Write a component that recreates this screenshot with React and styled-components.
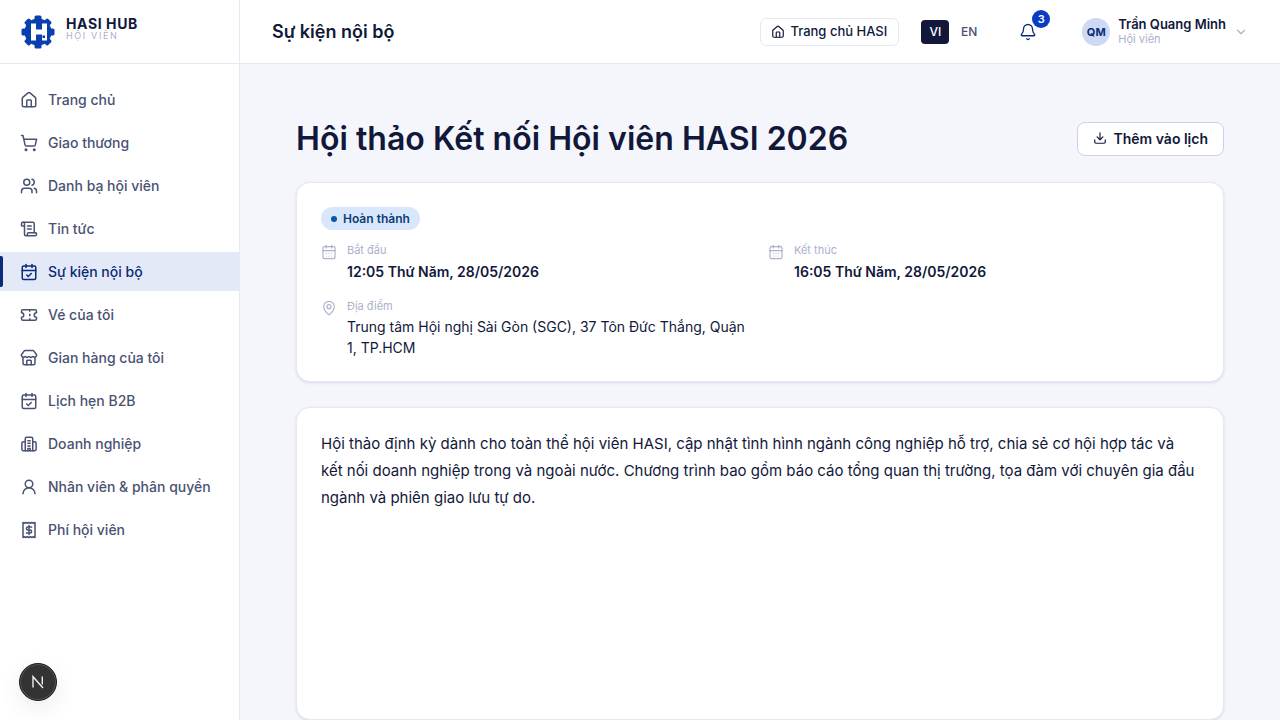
import React from 'react';
import styled, { createGlobalStyle } from 'styled-components';
import {
  House, ShoppingCart, Users, ScrollText, CalendarCheck, Ticket, Store,
  UserRound, Bell, ChevronDown, Download, CalendarDays, MapPin,
} from 'lucide-react';

const GlobalStyle = createGlobalStyle`
  html, body { margin: 0; height: 100%; overflow: hidden; }
  body { font-family: Inter, 'Noto Sans', sans-serif; color: #11183a; background: #f5f6fc; }
  * { box-sizing: border-box; }
  svg { flex-shrink: 0; }
`;

const Shell = styled.div`
  display: grid;
  grid-template-columns: 240px 1fr;
  grid-template-rows: 64px 1fr;
  width: 1280px;
  height: 720px;
  overflow: hidden;
`;

const Brand = styled.div`
  display: flex;
  align-items: center;
  gap: 11px;
  padding-left: 21px;
  background: #fff;
  border-right: 1px solid #e6e8f3;
  border-bottom: 1px solid #e6e8f3;
`;

const BrandText = styled.div`
  display: flex;
  flex-direction: column;
  margin-top: -6px;
`;

const BrandName = styled.span`
  font-size: 14px;
  line-height: 15px;
  font-weight: 700;
  letter-spacing: 0.6px;
  color: #11183a;
`;

const BrandSub = styled.span`
  font-size: 9px;
  line-height: 10px;
  letter-spacing: 1.65px;
  color: #aab1cb;
`;

const Header = styled.header`
  display: flex;
  align-items: center;
  padding: 0 32px;
  background: #fff;
  border-bottom: 1px solid #e6e8f3;
`;

const PageName = styled.h1`
  flex: 1;
  margin: 0;
  font-size: 18px;
  font-weight: 600;
  color: #11183a;
`;

const HomeLink = styled.a`
  display: flex;
  align-items: center;
  gap: 5px;
  height: 28px;
  padding: 0 11px 1px 10px;
  border: 1px solid #e6e8f3;
  border-radius: 6px;
  font-size: 13px;
  font-weight: 500;
  color: #11183a;

  svg {
    margin-top: 1px;
  }
`;

const LangSwitch = styled.div`
  display: flex;
  gap: 6px;
  margin-left: 22px;
`;

const LangButton = styled.span`
  width: 28px;
  height: 24px;
  padding-bottom: 1px;
  display: grid;
  place-items: center;
  border-radius: 4px;
  font-size: 12px;
  font-weight: 500;
  color: ${p => (p.$active ? '#fff' : '#4a5272')};
  background: ${p => (p.$active ? '#11183a' : 'transparent')};
`;

const BellWrap = styled.div`
  position: relative;
  display: flex;
  margin-left: 36px;
  color: #0b2a7a;
`;

const BellBadge = styled.span`
  position: absolute;
  top: -13px;
  right: -13px;
  width: 18px;
  height: 18px;
  display: grid;
  place-items: center;
  border-radius: 50%;
  background: #0a3cc4;
  color: #fff;
  font-size: 11px;
  font-weight: 600;
`;

const UserBox = styled.div`
  display: flex;
  align-items: center;
  gap: 8px;
  margin-left: 45px;
`;

const Avatar = styled.div`
  width: 28px;
  height: 28px;
  display: grid;
  place-items: center;
  border-radius: 50%;
  background: #ced9f3;
  color: #0b2a7a;
  font-size: 11px;
  font-weight: 700;
`;

const UserText = styled.div`
  display: flex;
  flex-direction: column;
  margin-top: -1px;
`;

const UserName = styled.span`
  font-size: 13px;
  line-height: 16px;
  font-weight: 600;
  color: #11183a;
`;

const UserRole = styled.span`
  font-size: 11px;
  line-height: 14px;
  color: #aab1cb;
`;

const UserCaret = styled.span`
  display: flex;
  color: #aab1cb;
`;

const Sidebar = styled.nav`
  position: relative;
  display: flex;
  flex-direction: column;
  gap: 4px;
  padding-top: 16px;
  background: #fff;
  border-right: 1px solid #e6e8f3;
`;

const NavItem = styled.a`
  position: relative;
  display: flex;
  align-items: center;
  gap: 10px;
  height: 39px;
  padding-left: 20px;
  font-size: 14px;
  font-weight: 500;
  color: ${p => (p.$active ? '#0b2a7a' : '#4a5272')};
  background: ${p => (p.$active ? '#e3e9f6' : 'transparent')};

  &::before {
    content: '';
    display: ${p => (p.$active ? 'block' : 'none')};
    position: absolute;
    left: 0;
    top: 4px;
    bottom: 4px;
    width: 3px;
    border-radius: 0 2px 2px 0;
    background: #0b2a7a;
  }
`;

const DevBadge = styled.div`
  position: absolute;
  left: 19px;
  bottom: 19px;
  width: 38px;
  height: 38px;
  display: grid;
  place-items: center;
  border-radius: 50%;
  background: #333;
  border: 1px solid #1c1c1c;
  box-shadow: inset 0 0 0 1px #555, 0 8px 24px rgba(0, 0, 0, 0.08);
  color: #eee;
`;

const Main = styled.main`
  display: flex;
  flex-direction: column;
  gap: 25px;
  padding: 58px 56px 0;
  overflow: hidden;
`;

const TitleRow = styled.div`
  display: flex;
  align-items: center;
  justify-content: space-between;
  height: 34px;
  margin-bottom: 1px;
`;

const Title = styled.h2`
  margin: 0 0 2px;
  font-size: 32px;
  font-weight: 600;
  letter-spacing: 0.03px;
  color: #11183a;
`;

const AddButton = styled.button`
  display: flex;
  align-items: center;
  gap: 7px;
  height: 34px;
  padding: 0 15px 2px;
  border: 1px solid #cdd2e6;
  border-radius: 8px;
  background: #fff;
  font: 600 14px Inter, sans-serif;
  color: #11183a;
`;

const Card = styled.section`
  padding: 24px 24px 23px;
  background: #fff;
  border: 1px solid #e6e8f3;
  border-radius: 14px;
  box-shadow: 0 1px 3px rgba(17, 24, 58, 0.12);
`;

const BodyCard = styled(Card)`
  height: 420px;
  font-size: 15px;
  line-height: 27px;
  color: #11183a;
  padding-top: 22px;
`;

const Status = styled.span`
  display: flex;
  width: fit-content;
  align-items: center;
  gap: 6px;
  height: 23px;
  padding: 0 10px;
  border-radius: 12px;
  background: #d9e7fd;
  color: #0b3d73;
  font-size: 12px;
  font-weight: 600;
`;

const StatusDot = styled.i`
  width: 6px;
  height: 6px;
  border-radius: 50%;
  background: #0b56a5;
`;

const InfoGrid = styled.div`
  display: grid;
  grid-template-columns: 425px 1fr;
  column-gap: 22px;
  row-gap: 16px;
  margin-top: 12px;
`;

const Info = styled.div`
  display: flex;
  gap: 10px;
  color: #aab1cb;

  svg {
    margin-top: 2px;
  }
`;

const InfoLabel = styled.div`
  font-size: 11px;
  line-height: 16px;
  color: #aab1cb;
`;

const InfoStrong = styled.div`
  margin-top: 4px;
  font-size: 14px;
  line-height: 20px;
  font-weight: 600;
  color: #11183a;
`;

const InfoPlain = styled.div`
  margin-top: 2px;
  font-size: 14px;
  line-height: 21px;
  color: #11183a;
`;

const Logo = () => (
  <svg width="34" height="34" viewBox="0 0 34 34">
    <circle cx="17" cy="17" r="13.500" fill="#0a3fae" />
    {[0, 45, 90, 135, 180, 225, 270, 315].map(a => (
      <rect key={a} x="13.500" y="0.500" width="7" height="6" rx="1.500" fill="#0a3fae" transform={`rotate(${a} 17 17)`} />
    ))}
    <path d="M10 8.500h5v6h6v-6h5v17h-5v-6h-6v6h-5z" fill="#fff" />
    <rect x="21.500" y="20.500" width="2.500" height="2.500" fill="#0a3fae" />
  </svg>
);

const BuildingIcon = ({ size }) => (
  <svg width={size} height={size} viewBox="0 0 24 24" fill="none" stroke="currentColor" strokeWidth="2" strokeLinecap="round" strokeLinejoin="round">
    <path d="M7 21V5a2 2 0 0 1 2-2h6a2 2 0 0 1 2 2v16z" />
    <path d="M7 9H4.500A2 2 0 0 0 2.500 11v8a2 2 0 0 0 2 2H7M17 9h2.500a2 2 0 0 1 2 2v8a2 2 0 0 1-2 2H17" />
    <path d="M10.500 7.500h3M10.500 11h3M10.500 14.500h3M10.500 21v-3h3v3" />
  </svg>
);

const FeeIcon = ({ size }) => (
  <svg width={size} height={size} viewBox="0 0 24 24" fill="none" stroke="currentColor" strokeWidth="2" strokeLinecap="round" strokeLinejoin="round">
    <path d="M4 2l2 1 2-1 2 1 2-1 2 1 2-1 2 1 2-1v20l-2-1-2 1-2-1-2 1-2-1-2 1-2-1-2 1z" />
    <path d="M15.500 8h-5a2 2 0 0 0 0 4h3a2 2 0 0 1 0 4h-5M12 6v12" />
  </svg>
);

const menu = [
  ['Trang chủ', House],
  ['Giao thương', ShoppingCart],
  ['Danh bạ hội viên', Users],
  ['Tin tức', ScrollText],
  ['Sự kiện nội bộ', CalendarCheck, true],
  ['Vé của tôi', Ticket],
  ['Gian hàng của tôi', Store],
  ['Lịch hẹn B2B', CalendarCheck],
  ['Doanh nghiệp', BuildingIcon],
  ['Nhân viên & phân quyền', UserRound],
  ['Phí hội viên', FeeIcon],
];

export default function App() {
  return (
    <Shell>
      <GlobalStyle />
      <Brand>
        <Logo />
        <BrandText>
          <BrandName>HASI HUB</BrandName>
          <BrandSub>HỘI VIÊN</BrandSub>
        </BrandText>
      </Brand>
      <Header>
        <PageName>Sự kiện nội bộ</PageName>
        <HomeLink><House size={14} />Trang chủ HASI</HomeLink>
        <LangSwitch>
          <LangButton $active>VI</LangButton>
          <LangButton>EN</LangButton>
        </LangSwitch>
        <BellWrap>
          <Bell size={18} strokeWidth={1.75} />
          <BellBadge>3</BellBadge>
        </BellWrap>
        <UserBox>
          <Avatar>QM</Avatar>
          <UserText>
            <UserName>Trần Quang Minh</UserName>
            <UserRole>Hội viên</UserRole>
          </UserText>
          <UserCaret><ChevronDown size={14} strokeWidth={2} /></UserCaret>
        </UserBox>
      </Header>
      <Sidebar>
        {menu.map(([label, Icon, active]) => (
          <NavItem key={label} $active={active}>
            <Icon size={18} />
            {label}
          </NavItem>
        ))}
        <DevBadge>
          <svg width="16" height="16" viewBox="0 0 16 16" fill="none" stroke="currentColor" strokeWidth="1.4">
            <path d="M3 13.500V2.700L13 14M12.300 2.500v8" />
          </svg>
        </DevBadge>
      </Sidebar>
      <Main>
        <TitleRow>
          <Title>Hội thảo Kết nối Hội viên HASI 2026</Title>
          <AddButton><Download size={14} />Thêm vào lịch</AddButton>
        </TitleRow>
        <Card>
          <Status><StatusDot />Hoàn thành</Status>
          <InfoGrid>
            <Info>
              <CalendarDays size={16} strokeWidth={1.75} />
              <div>
                <InfoLabel>Bắt đầu</InfoLabel>
                <InfoStrong>12:05 Thứ Năm, 28/05/2026</InfoStrong>
              </div>
            </Info>
            <Info>
              <CalendarDays size={16} strokeWidth={1.75} />
              <div>
                <InfoLabel>Kết thúc</InfoLabel>
                <InfoStrong>16:05 Thứ Năm, 28/05/2026</InfoStrong>
              </div>
            </Info>
            <Info>
              <MapPin size={16} strokeWidth={1.75} />
              <div>
                <InfoLabel>Địa điểm</InfoLabel>
                <InfoPlain>Trung tâm Hội nghị Sài Gòn (SGC), 37 Tôn Đức Thắng, Quận 1, TP.HCM</InfoPlain>
              </div>
            </Info>
          </InfoGrid>
        </Card>
        <BodyCard>
          Hội thảo định kỳ dành cho toàn thể hội viên HASI, cập nhật tình hình ngành công nghiệp hỗ trợ, chia sẻ cơ hội hợp tác và kết nối doanh nghiệp trong và ngoài nước. Chương trình bao gồm báo cáo tổng quan thị trường, tọa đàm với chuyên gia đầu ngành và phiên giao lưu tự do.
        </BodyCard>
      </Main>
    </Shell>
  );
}
